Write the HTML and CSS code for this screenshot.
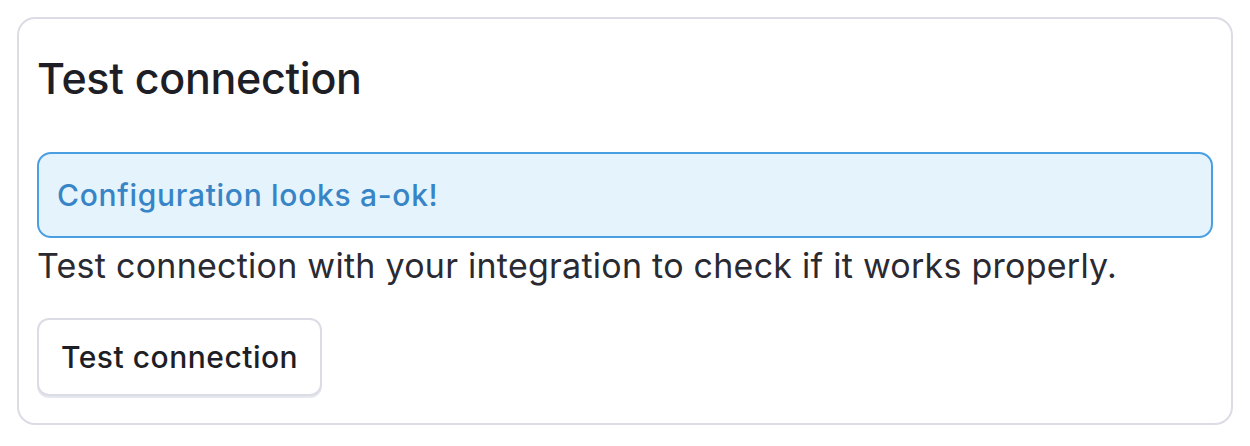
FILE: index.html
```html
<!DOCTYPE html>
<html>
<head>
<meta charset="utf-8">
<link rel="stylesheet" href="styles.css">
</head>
<body>
<div class="page">
  <section class="card">
    <h2 class="title">Test connection</h2>
    <div class="alert">Configuration looks a-ok!</div>
    <p class="desc">Test connection with your integration to check if it works properly.</p>
    <button class="btn">Test connection</button>
  </section>
</div>
</body>
</html>
```

FILE: styles.css
```css
html, body {
  margin: 0;
  padding: 0;
  background: #ffffff;
}
body {
  font-family: "Inter", "Noto Sans", sans-serif;
  color: #1f1f28;
}
.page {
  padding: 17px 17px 0 17px;
}
.card {
  border: 2px solid #dcdce6;
  border-radius: 18px;
  padding: 29px 18px 27px 18px;
  display: flex;
  flex-direction: column;
  align-items: flex-start;
}
.title {
  margin: 0;
  font-size: 43px;
  font-weight: 500;
  line-height: 60px;
  letter-spacing: -0.3px;
  color: #1e1e26;
}
.alert {
  align-self: stretch;
  margin-top: 44px;
  height: 86px;
  box-sizing: border-box;
  border: 2px solid #4a9fe3;
  background: #e5f3fd;
  border-radius: 14px;
  padding: 0 18px;
  display: flex;
  align-items: center;
  font-size: 30px;
  font-weight: 500;
  letter-spacing: 0.7px;
  color: #3784c6;
}
.desc {
  margin: 6px 0 0 0;
  font-size: 34px;
  line-height: 44px;
  letter-spacing: 0.25px;
  color: #2a2a32;
}
.btn {
  margin-top: 30px;
  font-family: inherit;
  font-size: 30px;
  font-weight: 500;
  letter-spacing: 0.5px;
  color: #1e1e26;
  background: #ffffff;
  border: 2px solid #dcdce6;
  border-radius: 12px;
  padding: 0 22px;
  height: 78px;
  box-shadow: 0 2px 0 #e6e6ee;
}
```
